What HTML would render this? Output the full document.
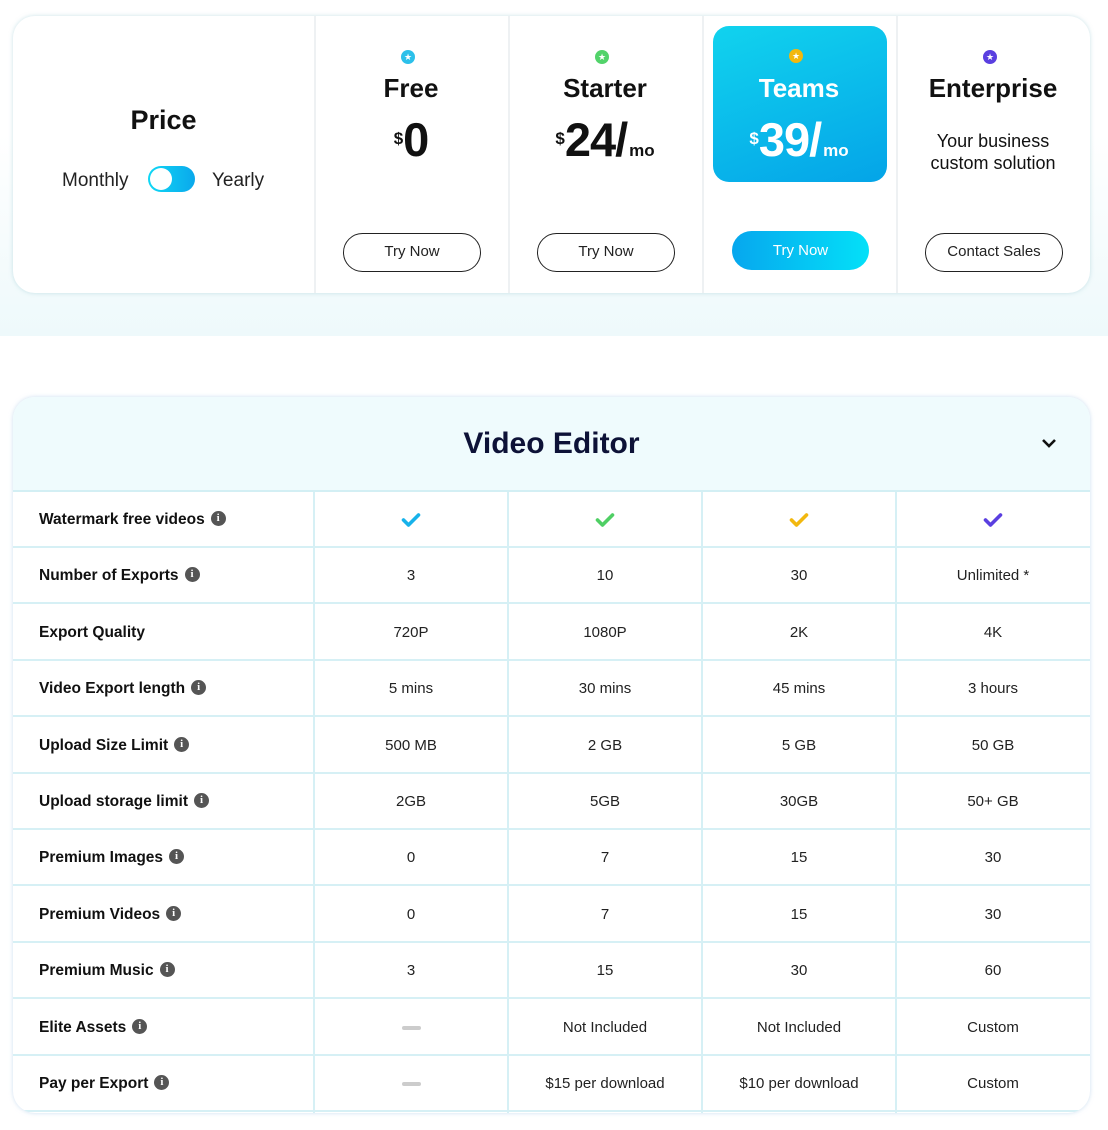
<!DOCTYPE html>
<html><head><meta charset="utf-8"><style>
*{box-sizing:border-box;margin:0;padding:0}
body{width:1108px;height:1130px;background:#fff;font-family:"Liberation Sans",sans-serif;position:relative;overflow:hidden;color:#111}
.bg{position:absolute;left:0;top:0;width:1108px;height:336px;background:linear-gradient(180deg,#fff 0%,#fff 40%,#eef9fb 100%)}
.card{position:absolute;left:13px;top:16px;width:1077px;height:277px;background:#fff;border-radius:22px;box-shadow:0 0 4px rgba(150,200,210,.5);overflow:hidden}
.vl{position:absolute;top:0;width:2px;height:277px;background:#eef1f3}
.abs{position:absolute;text-align:center}
.star{position:absolute;width:14px;height:14px;border-radius:50%;top:34px}
.star::after{content:"★";position:absolute;left:0;top:0;width:14px;line-height:14px;font-size:9px;color:#fff;text-align:center}
.name{position:absolute;top:57px;width:194px;text-align:center;font-weight:bold;font-size:26px}
.price{position:absolute;top:96px;width:194px;text-align:center;font-weight:bold;font-size:47px;letter-spacing:-1px}
.price small{font-size:17px;vertical-align:12px;margin-right:1px}
.price i{font-style:normal;font-size:17px;letter-spacing:0;margin-left:2px}
.btn{position:absolute;top:217px;width:138px;height:39px;border:1.5px solid #222;border-radius:20px;font-size:15px;line-height:36px;text-align:center;color:#222}
.tbl{position:absolute;left:13px;top:397px;width:1077px;height:716px;border-radius:22px;box-shadow:0 0 4px rgba(170,200,230,.6);overflow:hidden;background:#fff}
.head{position:absolute;left:0;top:0;width:1077px;height:95px;background:#effbfd;border-bottom:2px solid #d3eff4}
.row{position:absolute;left:0;width:1077px;height:56px;border-bottom:2px solid #d6f0f5}
.lbl{position:absolute;left:26px;top:0;line-height:56px;font-weight:bold;font-size:15.5px;color:#111}
.ii{display:inline-block;width:15px;height:15px;border-radius:50%;background:#555;color:#fff;font-size:11px;line-height:15px;text-align:center;vertical-align:middle;margin-left:6px;margin-top:-3px;font-family:"Liberation Serif",serif;font-weight:bold}
.c{position:absolute;top:0;width:194px;text-align:center;line-height:56px;font-size:15px;color:#222}
.cl{position:absolute;top:95px;width:2px;height:621px;background:#d6f0f5}
.dash{display:inline-block;width:19px;height:4px;border-radius:2px;background:#ccc;vertical-align:middle}
</style></head><body>
<div class="bg"></div>
<div class="card">
 <div class="vl" style="left:301px"></div><div class="vl" style="left:495px"></div><div class="vl" style="left:689px"></div><div class="vl" style="left:883px"></div>
 <div class="abs" style="left:0;width:301px;top:89px;font-weight:bold;font-size:27px">Price</div>
 <div class="abs" style="left:49px;top:154px;font-size:19px;color:#222">Monthly</div>
 <div style="position:absolute;left:135px;top:150px;width:47px;height:26px;border-radius:13px;background:linear-gradient(90deg,#10d8f5,#0aa8ec)"><div style="position:absolute;left:2px;top:2px;width:22px;height:22px;border-radius:50%;background:#fff"></div></div>
 <div class="abs" style="left:199px;top:154px;font-size:19px;color:#222">Yearly</div>

 <div class="star" style="left:388px;background:#2cc0ea"></div>
 <div class="name" style="left:301px">Free</div>
 <div class="price" style="left:301px"><small>$</small>0</div>
 <div class="btn" style="left:330px">Try Now</div>

 <div class="star" style="left:582px;background:#52d36a"></div>
 <div class="name" style="left:495px">Starter</div>
 <div class="price" style="left:495px"><small>$</small>24/<i>mo</i></div>
 <div class="btn" style="left:524px">Try Now</div>

 <div style="position:absolute;left:700px;top:10px;width:174px;height:156px;border-radius:16px;background:linear-gradient(160deg,#11d3ee,#04a4e8)"></div>
 <div class="star" style="left:776px;top:33px;background:#f2b80f"></div>
 <div class="name" style="left:689px;color:#fff">Teams</div>
 <div class="price" style="left:689px;color:#fff"><small>$</small>39/<i>mo</i></div>
 <div class="btn" style="left:719px;top:215px;width:137px;border:none;color:#fff;background:linear-gradient(90deg,#06a7ee,#04e0f8);line-height:39px">Try Now</div>

 <div class="star" style="left:970px;background:#5a3fe0"></div>
 <div class="name" style="left:883px">Enterprise</div>
 <div class="abs" style="left:883px;width:194px;top:114px;font-size:18px;line-height:22px;color:#111">Your business<br>custom solution</div>
 <div class="btn" style="left:912px">Contact Sales</div>
</div>

<div class="tbl">
 <div class="head"><div class="abs" style="left:0;width:1077px;top:30px;font-weight:bold;font-size:30px;color:#0d1237">Video Editor</div>
 <svg style="position:absolute;left:1028px;top:40px" width="16" height="12" viewBox="0 0 16 12"><path d="M2 3 L8 9 L14 3" stroke="#111" stroke-width="2.6" fill="none"/></svg></div>
 <div class="cl" style="left:300px"></div><div class="cl" style="left:494px"></div><div class="cl" style="left:688px"></div><div class="cl" style="left:882px"></div>
 <div id="rows"></div>
</div>
<script>
var d=[["Watermark free videos",1,["c0","c1","c2","c3"]],["Number of Exports",1,["3","10","30","Unlimited *"]],["Export Quality",0,["720P","1080P","2K","4K"]],["Video Export length",1,["5 mins","30 mins","45 mins","3 hours"]],["Upload Size Limit",1,["500 MB","2 GB","5 GB","50 GB"]],["Upload storage limit",1,["2GB","5GB","30GB","50+ GB"]],["Premium Images",1,["0","7","15","30"]],["Premium Videos",1,["0","7","15","30"]],["Premium Music",1,["3","15","30","60"]],["Elite Assets",1,["-","Not Included","Not Included","Custom"]],["Pay per Export",1,["-","$15 per download","$10 per download","Custom"]]];
var cols=["#17b2ea","#4fcf64","#f2b80f","#5a3fe0"],h="";
d.forEach(function(r,i){var t=95+i*56.4;h+='<div class="row" style="top:'+t+'px"><div class="lbl">'+r[0]+(r[1]?'<span class="ii">i</span>':'')+'</div>';
r[2].forEach(function(v,j){var x=301+j*194,s=v;if(v[0]=="c"&&v.length==2)s='<svg width="20" height="16" viewBox="0 0 20 16" style="vertical-align:middle"><path d="M2.5 8 L7.5 13 L17.5 3" stroke="'+cols[j]+'" stroke-width="3.6" fill="none" stroke-linecap="round" stroke-linejoin="round"/></svg>';else if(v=="-")s='<span class="dash"></span>';h+='<div class="c" style="left:'+x+'px">'+s+'</div>';});h+='</div>';});
document.getElementById("rows").innerHTML=h;
</script>
</body></html>
